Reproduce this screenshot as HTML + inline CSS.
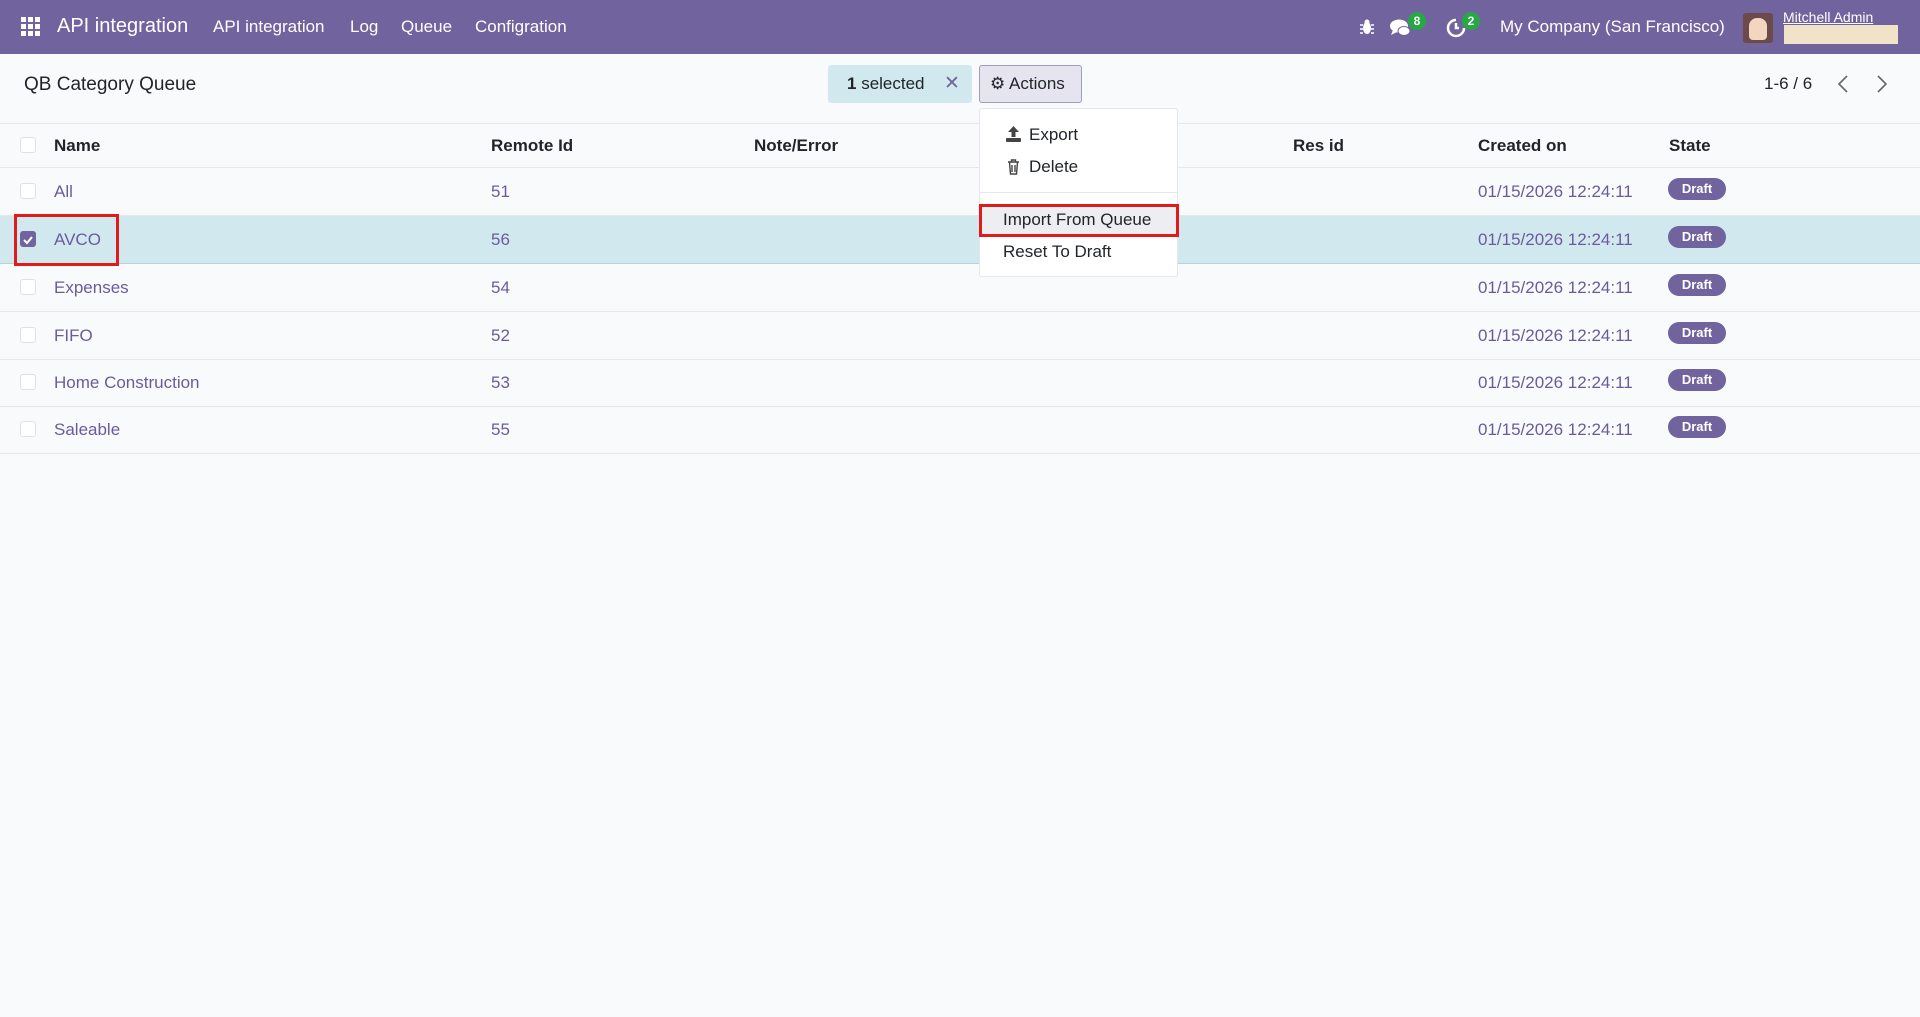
<!DOCTYPE html>
<html><head><meta charset="utf-8"><style>
*{box-sizing:border-box;margin:0;padding:0}
body{width:1920px;height:1017px;background:#f9fafb;font-family:"Liberation Sans",sans-serif;color:#212529;position:relative;overflow:hidden;font-size:17px}
.nav{position:absolute;left:0;top:0;width:1920px;height:54px;background:#71639e;color:#fff}
.nav span{position:absolute;top:17px;font-size:17px;white-space:nowrap}
.abs{position:absolute;white-space:nowrap}
.badge{position:absolute;background:#28a745;color:#fff;font-size:12px;border-radius:9px;width:18px;height:18px;text-align:center;line-height:18px;font-weight:bold}
.row{position:absolute;left:0;width:1920px;height:48px;border-bottom:1px solid #e5e7eb}
.row .c{position:absolute;top:14px;color:#6b5b9e}
.cb{position:absolute;left:20px;top:15px;width:16px;height:16px;border:1px solid #dee2e6;border-radius:3px;background:#fff}
.draft{position:absolute;left:1668px;top:10px;width:58px;height:22px;border-radius:11px;background:#71639e;color:#fff;font-size:13px;font-weight:bold;text-align:center;line-height:22px}
.hdr{position:absolute;top:136px;font-weight:bold;color:#212529;font-size:17px}
</style></head><body>
<div class="nav">
 <svg class="abs" style="left:21px;top:17px" width="20" height="20" viewBox="0 0 20 20" fill="#fff"><rect x="0" y="0" width="5" height="5"/><rect x="7" y="0" width="5" height="5"/><rect x="14" y="0" width="5" height="5"/><rect x="0" y="7" width="5" height="5"/><rect x="7" y="7" width="5" height="5"/><rect x="14" y="7" width="5" height="5"/><rect x="0" y="14" width="5" height="5"/><rect x="7" y="14" width="5" height="5"/><rect x="14" y="14" width="5" height="5"/></svg>
 <span style="left:57px;top:15px;font-size:20px">API integration</span>
 <span style="left:213px">API integration</span>
 <span style="left:350px">Log</span>
 <span style="left:401px">Queue</span>
 <span style="left:475px">Configration</span>
 <svg class="abs" style="left:1360px;top:19px" width="14" height="16" viewBox="0 0 14 16" fill="#fff"><ellipse cx="7" cy="9" rx="4" ry="6"/><circle cx="7" cy="3" r="2.5"/><path d="M0 6h3M11 6h3M0 10h3M11 10h3M0 14h3M11 14h3" stroke="#fff" stroke-width="1.5"/></svg>
 <svg class="abs" style="left:1390px;top:18px" width="22" height="20" viewBox="0 0 22 20" fill="#fff"><ellipse cx="9" cy="8" rx="9" ry="6.5"/><path d="M3 12l-2 5 6-3z"/><ellipse cx="14" cy="13" rx="6" ry="4.5" stroke="#71639e" stroke-width="1"/></svg>
 <div class="badge" style="left:1408px;top:12px">8</div>
 <svg class="abs" style="left:1446px;top:18px" width="20" height="20" viewBox="0 0 20 20" fill="none" stroke="#fff" stroke-width="2.5"><path d="M10 2a8 8 0 1 0 8 8"/><path d="M10 5v5h3"/></svg>
 <div class="badge" style="left:1462px;top:12px">2</div>
 <span style="left:1500px">My Company (San Francisco)</span>
 <div class="abs" style="left:1743px;top:13px;width:30px;height:30px;background:#6d4a4a;border-radius:3px"><div style="margin:5px 6px;width:18px;height:22px;background:#f2d6c0;border-radius:8px 8px 4px 4px"></div></div>
 <span style="left:1783px;top:9px;font-size:14px;text-decoration:underline">Mitchell Admin</span>
 <div class="abs" style="left:1784px;top:25px;width:114px;height:19px;background:#f0e3c8"></div>
</div>
<div class="abs" style="left:24px;top:74px;font-size:19px">QB Category Queue</div>
<div class="abs" style="left:828px;top:65px;width:144px;height:38px;background:#d1e9ee;border-radius:3px"></div>
<div class="abs" style="left:847px;top:74px;font-size:17px"><b>1</b> selected</div>
<div class="abs" style="left:944px;top:72px;font-size:19px;color:#71639e">✕</div>
<div class="abs" style="left:979px;top:65px;width:103px;height:38px;background:#e6e4ef;border:1px solid #a29bc0;border-radius:3px"></div>
<div class="abs" style="left:990px;top:74px;font-size:17px">⚙ Actions</div>
<div class="abs" style="left:1764px;top:74px;font-size:17px">1-6 / 6</div>
<svg class="abs" style="left:1838px;top:75px" width="10" height="18" viewBox="0 0 10 18" fill="none" stroke="#666" stroke-width="1.6"><path d="M9 1L1 9l8 8"/></svg>
<svg class="abs" style="left:1877px;top:75px" width="10" height="18" viewBox="0 0 10 18" fill="none" stroke="#666" stroke-width="1.6"><path d="M1 1l8 8-8 8"/></svg>
<div class="abs" style="left:0;top:123px;width:1920px;height:1px;background:#e5e7eb"></div>
<div class="abs" style="left:0;top:167px;width:1920px;height:1px;background:#e5e7eb"></div>
<div class="cb" style="top:137px"></div>
<div class="hdr" style="left:54px">Name</div>
<div class="hdr" style="left:491px">Remote Id</div>
<div class="hdr" style="left:754px">Note/Error</div>
<div class="hdr" style="left:1293px">Res id</div>
<div class="hdr" style="left:1478px">Created on</div>
<div class="hdr" style="left:1669px">State</div>

<div class="row" style="top:168px"><div class="cb"></div><div class="c" style="left:54px">All</div><div class="c" style="left:491px">51</div><div class="c" style="left:1478px">01/15/2026 12:24:11</div><div class="draft">Draft</div></div>
<div class="row" style="top:216px;background:#d1e9ee;border-bottom-color:#b7d3d9"><div class="cb" style="background:#71639e;border-color:#71639e"><svg width="14" height="14" viewBox="0 0 14 14" fill="none" stroke="#fff" stroke-width="2"><path d="M3 7l3 3 5-6"/></svg></div><div class="c" style="left:54px">AVCO</div><div class="c" style="left:491px">56</div><div class="c" style="left:1478px">01/15/2026 12:24:11</div><div class="draft">Draft</div></div>
<div class="row" style="top:264px"><div class="cb"></div><div class="c" style="left:54px">Expenses</div><div class="c" style="left:491px">54</div><div class="c" style="left:1478px">01/15/2026 12:24:11</div><div class="draft">Draft</div></div>
<div class="row" style="top:312px"><div class="cb"></div><div class="c" style="left:54px">FIFO</div><div class="c" style="left:491px">52</div><div class="c" style="left:1478px">01/15/2026 12:24:11</div><div class="draft">Draft</div></div>
<div class="row" style="top:359px"><div class="cb"></div><div class="c" style="left:54px">Home Construction</div><div class="c" style="left:491px">53</div><div class="c" style="left:1478px">01/15/2026 12:24:11</div><div class="draft">Draft</div></div>
<div class="row" style="top:406px"><div class="cb"></div><div class="c" style="left:54px">Saleable</div><div class="c" style="left:491px">55</div><div class="c" style="left:1478px">01/15/2026 12:24:11</div><div class="draft">Draft</div></div>

<div class="abs" style="left:14px;top:214px;width:105px;height:52px;border:3px solid #e01b1b"></div>

<div class="abs" style="left:979px;top:108px;width:199px;height:169px;background:#fff;border:1px solid #e5e7eb;border-radius:3px"></div>
<svg class="abs" style="left:1006px;top:126px" width="15" height="16" viewBox="0 0 15 16" fill="#444"><path d="M7.5 0L2 6h3.5v5h4V6H13z"/><rect x="0" y="12" width="15" height="4" rx="1"/></svg>
<div class="abs" style="left:1029px;top:125px;font-size:17px">Export</div>
<svg class="abs" style="left:1007px;top:159px" width="13" height="16" viewBox="0 0 13 16" fill="none" stroke="#444" stroke-width="1.4"><path d="M1 3h11M4.5 3V1h4v2M2.5 3l1 12h6l1-12M5 6v7M8 6v7"/></svg>
<div class="abs" style="left:1029px;top:157px;font-size:17px">Delete</div>
<div class="abs" style="left:980px;top:192px;width:197px;height:1px;background:#e5e7eb"></div>
<div class="abs" style="left:979px;top:204px;width:200px;height:33px;background:#eceef1;border:3px solid #e01b1b"></div>
<div class="abs" style="left:1003px;top:210px;font-size:17px">Import From Queue</div>
<div class="abs" style="left:1003px;top:242px;font-size:17px">Reset To Draft</div>
</body></html>
